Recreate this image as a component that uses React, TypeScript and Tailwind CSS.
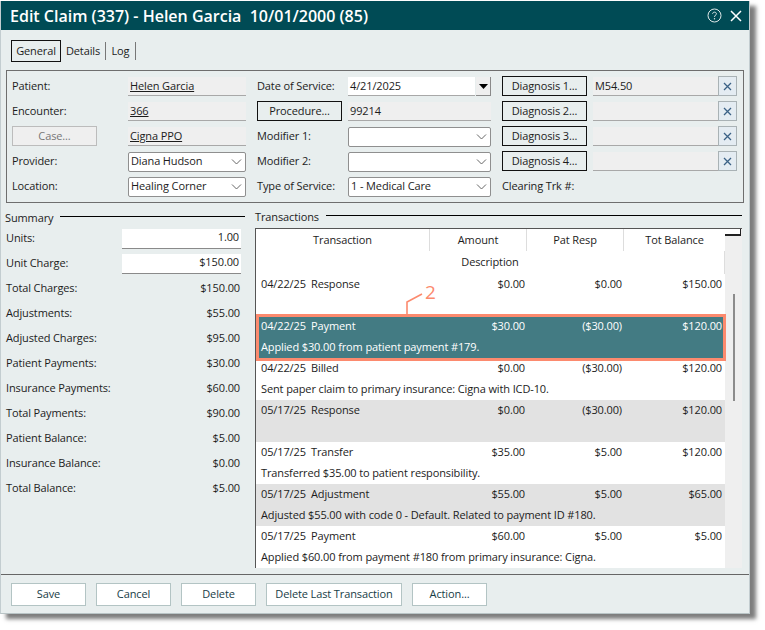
const Chevron = () => (
  <svg width="11" height="6" viewBox="0 0 11 6" className="shrink-0 text-[#666]">
    <path d="M1 0.5 L5.5 5 L10 0.5" fill="none" stroke="currentColor" strokeWidth="1" />
  </svg>
);

const Label = ({ children }: { children: React.ReactNode }) => (
  <div className="flex h-5 items-center whitespace-nowrap">{children}</div>
);

const ReadField = ({ children, link, className = "" }: { children?: React.ReactNode; link?: boolean; className?: string }) => (
  <div className={`mt-px flex h-[19px] items-center border-b border-b-[#a8a8a8] bg-[#efefef] pl-[2px] whitespace-nowrap ${link ? "underline" : ""} ${className}`}>
    {children}
  </div>
);

const Combo = ({ children }: { children?: React.ReactNode }) => (
  <div className="mt-px flex h-5 items-center justify-between rounded-[2px] border border-[#8f8f8f] bg-white pb-px pl-[2px] pr-[3px] whitespace-nowrap">
    <span>{children}</span>
    <Chevron />
  </div>
);

const BlackButton = ({ children }: { children: React.ReactNode }) => (
  <div className="flex h-5 items-center justify-center border border-[#111] bg-[#e8eeee] whitespace-nowrap">{children}</div>
);

const ClearBox = () => (
  <div className="flex h-5 w-[19px] shrink-0 items-center justify-center border border-[#a9b2b5] bg-[#e4ecf2]">
    <svg width="9" height="9" viewBox="0 0 9 9" className="text-[#3b6286]">
      <path d="M1 1 L8 8 M8 1 L1 8" stroke="currentColor" strokeWidth="1.3" fill="none" />
    </svg>
  </div>
);

const DiagRow = ({ n, value }: { n: number; value?: string }) => (
  <>
    <BlackButton>{`Diagnosis ${n}...`}</BlackButton>
    <div className="ml-[6px] flex items-start">
      <ReadField className="flex-1">{value}</ReadField>
      <ClearBox />
    </div>
  </>
);

const summary: [string, string][] = [
  ["Total Charges:", "$150.00"],
  ["Adjustments:", "$55.00"],
  ["Adjusted Charges:", "$95.00"],
  ["Patient Payments:", "$30.00"],
  ["Insurance Payments:", "$60.00"],
  ["Total Payments:", "$90.00"],
  ["Patient Balance:", "$5.00"],
  ["Insurance Balance:", "$0.00"],
  ["Total Balance:", "$5.00"],
];

type Tx = { d: string; t: string; a: string; p: string; b: string; desc: string; gray?: boolean; sel?: boolean };

const rows: Tx[] = [
  { d: "04/22/25", t: "Response", a: "$0.00", p: "$0.00", b: "$150.00", desc: "" },
  { d: "04/22/25", t: "Payment", a: "$30.00", p: "($30.00)", b: "$120.00", desc: "Applied $30.00 from patient payment #179.", sel: true },
  { d: "04/22/25", t: "Billed", a: "$0.00", p: "($30.00)", b: "$120.00", desc: "Sent paper claim to primary insurance: Cigna with ICD-10." },
  { d: "05/17/25", t: "Response", a: "$0.00", p: "($30.00)", b: "$120.00", desc: "", gray: true },
  { d: "05/17/25", t: "Transfer", a: "$35.00", p: "$5.00", b: "$120.00", desc: "Transferred $35.00 to patient responsibility." },
  { d: "05/17/25", t: "Adjustment", a: "$55.00", p: "$5.00", b: "$65.00", desc: "Adjusted $55.00 with code 0 - Default. Related to payment ID #180.", gray: true },
  { d: "05/17/25", t: "Payment", a: "$60.00", p: "$5.00", b: "$5.00", desc: "Applied $60.00 from payment #180 from primary insurance: Cigna." },
];

const Row = ({ r }: { r: Tx }) => (
  <div className={`relative h-[42px] ${r.sel ? "bg-[#437b83] text-white" : r.gray ? "bg-[#e2e2e2]" : "bg-white"}`}>
    <div className="grid h-[21px] grid-cols-[173px_96px_97px_100px] items-center whitespace-nowrap">
      <div className="flex pl-[5px]">
        <span className="w-[50px]">{r.d}</span>
        <span>{r.t}</span>
      </div>
      <div className="text-right">{r.a}</div>
      <div className="text-right">{r.p}</div>
      <div className="text-right">{r.b}</div>
    </div>
    <div className="flex h-[21px] items-center pl-[5px] whitespace-nowrap">{r.desc}</div>
    {r.sel && (
      <div className="absolute -bottom-[3px] left-0 -right-[1px] -top-[2px] z-10 border-[3px] border-[#fc8a6e]" />
    )}
    {r.sel && (
      <div className="absolute -top-[27px] left-[150px] z-10 h-[27px] w-[40px] text-[#fc8a6e]">
        <svg width="26" height="27" viewBox="0 0 26 27" className="absolute left-0 top-0">
          <path d="M1 27 V13 L16 5" fill="none" stroke="currentColor" strokeWidth="1.6" />
        </svg>
        <span className="absolute left-[19px] top-[-9px] text-[19px] leading-[24px]">2</span>
      </div>
    )}
  </div>
);

const FootBtn = ({ children, w }: { children: string; w: string }) => (
  <div className={`flex h-[23px] items-center justify-center border border-[#b3c4c4] bg-white ${w}`}>{children}</div>
);

export default function App() {
  return (
    <div className="h-[630px] w-[765px] overflow-hidden bg-white pt-px text-[11px] tracking-[-0.12px] text-[#1c1c1c] [font-family:'Open_Sans','Liberation_Sans',sans-serif]">
      <div className="flex h-[613px] w-[750px] flex-col border-x border-b border-x-[#c3cdd0] border-b-[#b9c4c6] bg-[#e8eeee] shadow-[6px_5px_4px_#7d7d7d]">
        {/* title bar */}
        <div className="flex h-[29px] shrink-0 items-center justify-between bg-[#004b55] pl-[9px] pr-[3px] text-white">
          <span className="text-[16px] font-semibold tracking-normal whitespace-pre">Edit Claim (337) - Helen Garcia  10/01/2000 (85)</span>
          <div className="flex items-center gap-[7px]">
            <svg width="15" height="15" viewBox="0 0 15 15">
              <circle cx="7.5" cy="7.5" r="6.5" fill="none" stroke="#dfe8e8" strokeWidth="1" />
              <path d="M5.6 5.8 C5.6 3.6 9.4 3.6 9.4 5.8 C9.4 7.3 7.5 7.2 7.5 8.9" fill="none" stroke="#dfe8e8" strokeWidth="1" />
              <circle cx="7.5" cy="10.8" r="0.7" fill="#dfe8e8" />
            </svg>
            <svg width="14" height="14" viewBox="0 0 14 14" className="mr-[3px]">
              <path d="M2 2 L12 12 M12 2 L2 12" stroke="#fff" strokeWidth="1.5" fill="none" />
            </svg>
          </div>
        </div>

        {/* tabs */}
        <div className="mt-[10px] flex h-[22px] shrink-0 items-center pl-[10px]">
          <div className="flex h-[22px] w-[50px] items-center justify-center border border-[#111]">General</div>
          <div className="flex h-[18px] w-[45px] items-center justify-center border-r border-r-[#777]">Details</div>
          <div className="flex h-[18px] w-[30px] items-center justify-center border-r border-r-[#777]">Log</div>
        </div>

        {/* claim panel */}
        <div className="mx-[5px] mt-2 h-[133px] shrink-0 border border-[#6e6e6e] px-[5px] pt-[5px]">
          <div className="grid auto-rows-[20px] grid-cols-[116px_118px_11px_91px_143px_11px_85px_150px] gap-y-[5px]">
            <Label>Patient:</Label>
            <ReadField link>Helen Garcia</ReadField>
            <div />
            <Label>Date of Service:</Label>
            <div className="flex gap-px">
              <div className="mt-px flex h-[19px] flex-1 items-center border-b border-b-[#a8a8a8] bg-white pl-[2px]">4/21/2025</div>
              <div className="mt-px flex h-[19px] w-[15px] items-center justify-center border-b border-r border-b-[#8a8a8a] border-r-[#8a8a8a] bg-[#efefef]">
                <svg width="9" height="5" viewBox="0 0 9 5"><path d="M0 0 H9 L4.5 5 Z" fill="#000" /></svg>
              </div>
            </div>
            <div />
            <DiagRow n={1} value="M54.50" />

            <Label>Encounter:</Label>
            <ReadField link>366</ReadField>
            <div />
            <div className="pr-[6px]"><BlackButton>Procedure...</BlackButton></div>
            <ReadField>99214</ReadField>
            <div />
            <DiagRow n={2} />

            <div className="pr-[31px]">
              <div className="flex h-5 items-center justify-center border border-[#bcbcbc] bg-[#efefef] text-[#777]">Case...</div>
            </div>
            <ReadField link>Cigna PPO</ReadField>
            <div />
            <Label>Modifier 1:</Label>
            <Combo />
            <div />
            <DiagRow n={3} />

            <Label>Provider:</Label>
            <Combo>Diana Hudson</Combo>
            <div />
            <Label>Modifier 2:</Label>
            <Combo />
            <div />
            <DiagRow n={4} />

            <Label>Location:</Label>
            <Combo>Healing Corner</Combo>
            <div />
            <Label>Type of Service:</Label>
            <Combo>1 - Medical Care</Combo>
            <div />
            <div className="col-span-2"><Label>Clearing Trk #:</Label></div>
          </div>
        </div>

        {/* main */}
        <div className="mt-[4px] flex min-h-0 flex-1 pl-[4px]">
          {/* summary */}
          <div className="w-[240px] shrink-0 pt-px">
            <div className="flex h-5 items-center">
              <span className="mr-[7px]">Summary</span>
              <div className="mb-[3px] h-px flex-1 bg-black" />
            </div>
            <div className="flex flex-col gap-[5px] pr-[4px] pl-px">
              <div className="flex h-5 items-center justify-between">
                <span>Units:</span>
                <div className="mt-[2px] flex h-5 w-[119px] items-center justify-end border-b border-b-[#8a8a8a] bg-white pb-[2px] pr-[2px]">1.00</div>
              </div>
              <div className="flex h-5 items-center justify-between">
                <span>Unit Charge:</span>
                <div className="mt-[2px] flex h-5 w-[119px] items-center justify-end border-b border-b-[#8a8a8a] bg-white pb-[2px] pr-[2px]">$150.00</div>
              </div>
              {summary.map(([k, v]) => (
                <div key={k} className="flex h-5 items-center justify-between pr-px">
                  <span>{k}</span>
                  <span>{v}</span>
                </div>
              ))}
            </div>
          </div>

          {/* transactions */}
          <div className="ml-[10px] flex w-[487px] flex-col">
            <div className="flex h-5 items-center">
              <span className="mr-[7px]">Transactions</span>
              <div className="mb-[3px] h-px flex-1 bg-black" />
            </div>
            <div className="mt-px flex h-[340px] border-l border-t border-l-[#555] border-t-[#555]">
              <div className="w-[469px] shrink-0">
                <div className="grid h-[22px] grid-cols-[174px_97px_97px_101px] bg-white text-center">
                  <div className="flex items-center justify-center border-r border-r-[#ddd]">Transaction</div>
                  <div className="flex items-center justify-center border-r border-r-[#ddd]">Amount</div>
                  <div className="flex items-center justify-center border-r border-r-[#ddd]">Pat Resp</div>
                  <div className="flex items-center justify-center">Tot Balance</div>
                </div>
                <div className="flex h-[23px] items-center justify-center border-r border-r-[#ddd] bg-white">Description</div>
                {rows.map((r, i) => (
                  <Row key={i} r={r} />
                ))}
              </div>
              <div className="w-[17px] shrink-0 bg-[#efefef]">
                <div className="h-[7px] w-[16px] border-b-2 border-r border-b-[#222] border-r-[#222] bg-white" />
                <div className="mx-auto mt-[58px] h-[107px] w-[2px] bg-[#8c8c8c]" />
              </div>
            </div>
          </div>
        </div>

        {/* footer */}
        <div className="flex h-[39px] shrink-0 items-start gap-[10px] border-t border-t-[#666] pl-[10px] pt-[8px] text-[#173d46]">
          <FootBtn w="w-[75px]">Save</FootBtn>
          <FootBtn w="w-[75px]">Cancel</FootBtn>
          <FootBtn w="w-[75px]">Delete</FootBtn>
          <FootBtn w="w-[136px]">Delete Last Transaction</FootBtn>
          <FootBtn w="w-[75px]">Action...</FootBtn>
        </div>
      </div>
    </div>
  );
}
